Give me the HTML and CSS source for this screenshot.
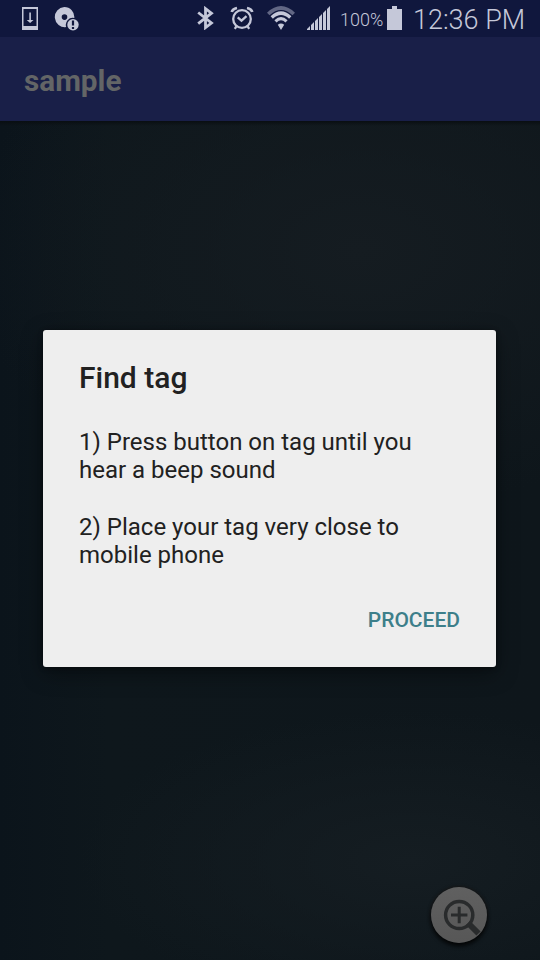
FILE: index.html
```
<!DOCTYPE html>
<html lang="en">
<head>
<meta charset="utf-8">
<title>sample</title>
<link rel="stylesheet" href="styles.css">
</head>
<body>
<div class="screen">
  <header class="status-bar">
    <div class="notifications">
      <svg class="icon" width="16" height="24" viewBox="0 0 16 24"><path fill-rule="evenodd" d="M0 0H16V23H0ZM1.5 2V19H14.5V2Z"/><path d="M7.3 5.5H8.9V13H11.5L8.1 16L4.7 13H7.3Z"/></svg>
      <svg class="icon" width="26" height="24" viewBox="0 0 26 24"><path fill-rule="evenodd" d="M10.3 0A10.1 10.1 0 0 1 20.3 11A7 7 0 0 0 12.2 20.1A10.1 10.1 0 1 1 10.3 0ZM10.5 7.3A2.8 2.8 0 1 0 10.5 12.9A2.8 2.8 0 1 0 10.5 7.3Z"/><circle cx="19" cy="17.8" r="5.7"/><path class="cutout" d="M17.9 13.4H20.1V18.5H17.9ZM17.9 20H20.1V22H17.9Z"/></svg>
    </div>
    <div class="system">
      <svg class="icon bluetooth" width="17" height="24" viewBox="0 0 17 24"><path class="line bold" d="M1.2 6.5L14.5 17L8.5 21.6V2.6L14.5 7.2L1.2 17.7"/></svg>
      <svg class="icon alarm" width="24" height="24" viewBox="0 0 24 24"><circle class="line" cx="12" cy="13" r="8.8"/><path class="line bold" d="M1.8 6Q2.5 3 7 2M22.2 6Q21.5 3 17 2"/><path class="line" d="M7.7 11.3L11.5 14.6L16.5 10.2M6.5 20.2L4.8 22.8M17.5 20.2L19.2 22.8"/></svg>
      <svg class="icon wifi" width="28" height="24" viewBox="0 0 28 24"><path class="faint" d="M0 6.7Q14 -6.6 28 6.7L25.5 9.3Q14 -1.2 2.5 9.3Z"/><path d="M3.6 10.3Q14 .2 24.4 10.3L22.1 12.7Q14 5.2 5.9 12.7ZM7.4 14.2Q14 8 20.6 14.2L18.5 16.4Q14 12.3 9.5 16.4ZM10.8 18.8Q14 16.4 17.2 18.8L14 24Z"/></svg>
      <svg class="icon signal" width="24" height="24" viewBox="0 0 24 24"><path d="M0 24V23L3 20V24ZM4 24V19L7 16V24ZM8 24V15L11 12V24ZM12 24V11L15 8V24ZM16 24V7L19 4V24ZM20 24V3L23 0V24Z"/></svg>
      <span class="percent">100%</span>
      <svg class="icon battery" width="15" height="24" viewBox="0 0 15 24"><path d="M5 0H10V3H15V24H0V3H5Z"/></svg>
      <time class="clock">12:36 PM</time>
    </div>
  </header>
  <div class="toolbar"><h1>sample</h1></div>
  <main class="content">
    <section class="dialog" role="dialog">
      <h2>Find tag</h2>
      <div class="message">
        <p>1) Press button on tag until you<br>hear a beep sound</p>
        <p>2) Place your tag very close to<br>mobile phone</p>
      </div>
      <button class="proceed">PROCEED</button>
    </section>
    <button class="zoom" aria-label="Zoom">
      <svg width="56" height="56" viewBox="0 0 56 56">
        <path class="handle" d="M37 36L47.5 46.5"/>
        <circle class="lens" cx="28.2" cy="28" r="13.6"/>
        <path class="plus" d="M20 28H36.4M28.2 19.8V36.2"/>
      </svg>
    </button>
  </main>
</div>
</body>
</html>
```
FILE: styles.css
```
* { box-sizing: border-box; }
body, h1, h2, p { margin: 0; }
body { font-family: Roboto, "Liberation Sans", sans-serif; background: #0e161c; }
button { border: 0; padding: 0; font-family: inherit; }
.screen { display: flex; flex-direction: column; width: 540px; height: 960px; overflow: hidden; }
.status-bar {
  display: flex; justify-content: space-between; height: 37px;
  padding: 0 16px 0 22px; background: #10173d; color: #c5c8d9;
}
.notifications { display: flex; gap: 16px; padding-top: 7px; }
.system { display: flex; align-items: flex-start; padding-top: 6px; }
.icon { display: block; flex: none; fill: #c5c8d9; }
.line { fill: none; stroke: #c5c8d9; stroke-width: 2.3; }
.bold { stroke-width: 2.8; }
.cutout { fill: #10173d; }
.faint { fill: #626784; }
.alarm { margin-left: 16px; }
.wifi { margin-left: 13px; }
.signal { margin-left: 12px; }
.percent { width: 44px; margin-left: 9px; font-size: 18px; line-height: 28px; font-weight: 300; white-space: nowrap; }
.battery { margin-left: 3px; }
.clock { width: 111px; margin-left: 11px; font-size: 27px; line-height: 28px; font-weight: 300; white-space: nowrap; }
.toolbar { display: flex; align-items: center; flex: none; height: 84px; padding: 3px 24px 0; background: #191f48; }
.toolbar h1 { color: #636566; font-size: 29.7px; line-height: 36px; font-weight: 700; }
.content {
  display: flex; flex: 1; flex-direction: column; align-items: flex-end; justify-content: space-between;
  padding: 209px 44px 17px 43px;
  background:
    linear-gradient(#090e12, transparent 5px),
    radial-gradient(ellipse 330px 150px at 410px 740px, #151d22, transparent),
    radial-gradient(ellipse 400px 260px at 360px 130px, #151c21, transparent),
    linear-gradient(90deg, #0b141b, #0e171c 20%, #0e161b);
}
.dialog {
  display: flex; flex-direction: column; width: 453px; height: 337px; padding: 30px 36px;
  border-radius: 3px; background: #eee; color: #212121;
  box-shadow: 0 6px 22px rgba(0, 0, 0, .4), 0 1px 5px rgba(0, 0, 0, .4);
}
.dialog h2 { font-size: 30px; line-height: 36px; font-weight: 500; }
.message { display: grid; gap: 29px; margin-top: 32px; font-size: 24px; line-height: 28px; white-space: nowrap; }
.proceed { align-self: flex-end; margin-top: 38px; background: none; color: #3d7f8a; font-size: 21px; line-height: 26px; font-weight: 500; }
.zoom {
  width: 56px; height: 56px; border-radius: 50%; margin-right: 9px;
  background: linear-gradient(#606060, #575757);
  box-shadow: 0 3px 4px #020405, 0 0 3px 1px #181818;
}
.zoom svg { display: block; fill: none; stroke: #292b2c; }
.lens { stroke-width: 3.5; }
.handle { stroke-width: 6; }
.plus { stroke-width: 3; }
```
